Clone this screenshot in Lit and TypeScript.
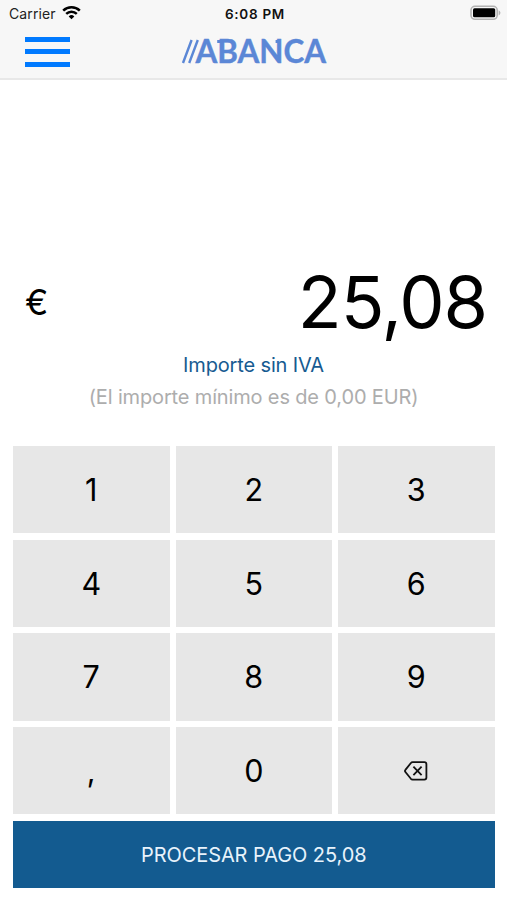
import { LitElement, html, css, svg } from "lit";
import { customElement, property } from "lit/decorators.js";

@customElement("status-bar")
class StatusBar extends LitElement {
  static styles = css`
    :host { display: grid; grid-template-columns: 1fr auto 1fr; align-items: center; height: 28px; padding: 0 6px 0 9px; }
    .left { display: flex; align-items: center; gap: 6px; font-size: 14px; letter-spacing: 0.1px; color: #222; }
    .left svg { margin-top: -3px; }
    .time { font-size: 13.5px; font-weight: 600; letter-spacing: 0.7px; margin-top: -1px; color: #111; }
    .left span { margin-top: -1px; }
    .right { display: flex; justify-content: flex-end; margin-top: -2px; }
    svg { display: block; }
  `;
  render() {
    return html`
      <div class="left">
        <span>Carrier</span>
        <svg width="19" height="15" viewBox="0 0 19 15" fill="none" stroke="#000" stroke-width="2.5">
          <path d="M1.2 5.6a11.8 11.8 0 0 1 16.6 0" />
          <path d="M4.2 8.9a7.6 7.6 0 0 1 10.6 0" />
          <path d="M9.5 14.2l-2.8-2.8a4 4 0 0 1 5.6 0z" fill="#000" stroke="none" />
        </svg>
      </div>
      <span class="time">6:08 PM</span>
      <div class="right">
        <svg width="31" height="16" viewBox="0 0 31 16">
          <rect x="1" y="1.3" width="26.2" height="13" rx="4" fill="#f7f7f7" stroke="#b2b2b2" stroke-width="1.6" />
          <rect x="3" y="3.3" width="22.2" height="9" rx="1.5" fill="#000" />
          <path d="M28.6 5.2c2.4 1.2 2.4 4 0 5.2z" fill="#b2b2b2" />
        </svg>
      </div>
    `;
  }
}

@customElement("nav-bar")
class NavBar extends LitElement {
  static styles = css`
    :host { display: grid; grid-template-columns: 1fr auto 1fr; height: 50px; padding: 0 25px; }
    .menu { display: flex; flex-direction: column; gap: 7.7px; width: 45px; padding-top: 9px; }
    .bar { height: 4.8px; background: #007aff; }
    .logo { display: block; margin-top: 4px; }
    .word { font: 700 32px "Lato", sans-serif; fill: #5b87d6; stroke: #5b87d6; stroke-width: 0.4; }
  `;
  render() {
    return html`
      <div class="menu"><div class="bar"></div><div class="bar"></div><div class="bar"></div></div>
      <svg class="logo" width="150" height="42" viewBox="0 0 150 42">
        <path d="M4 31L12.6 8M10.2 31L18.8 8" stroke="#5b87d6" stroke-width="2.4" />
        <text class="word" x="16.4" y="31" textLength="130.6" lengthAdjust="spacingAndGlyphs">ABANCA</text>
        <path d="M38.2 9.5h5M96.6 9.5h4" stroke="#5b87d6" stroke-width="3" />
      </svg>
      <span></span>
    `;
  }
}

const backspace = svg`
  <svg class="erase" width="24" height="20" viewBox="0 0 24 20" fill="none" stroke="#111" stroke-width="1.8" stroke-linejoin="round">
    <path d="M8.6 1.2h11.8a2 2 0 0 1 2 2v13.4a2 2 0 0 1-2 2H8.6a2.4 2.4 0 0 1-1.7-.8L1.6 11.2a1.9 1.9 0 0 1 0-2.6L6.9 2a2.4 2.4 0 0 1 1.7-.8z" />
    <path d="M9.4 5.7l8.2 8.4M17.6 5.7l-8.2 8.4" />
  </svg>`;

@customElement("key-pad")
class KeyPad extends LitElement {
  static styles = css`
    :host { display: grid; grid-template-columns: repeat(3, 1fr); grid-auto-rows: 87.2px; gap: 6.5px 6px; }
    .key { border: 0; padding: 0; background: #e7e7e7; font: 400 30.5px "Inter", sans-serif; color: #000; display: flex; align-items: center; justify-content: center; }
  `;
  render() {
    const keys = ["1", "2", "3", "4", "5", "6", "7", "8", "9", ",", "0", backspace];
    return keys.map((k) => html`<button class="key">${k}</button>`);
  }
}

@customElement("app-root")
class AppRoot extends LitElement {
  @property() amount = "25,08";
  static styles = css`
    :host { display: flex; flex-direction: column; box-sizing: border-box; height: 900px; background: #fff; font-family: "Inter", sans-serif; }
    .header { background: #f7f7f7; border-bottom: 2px solid #e8e8e8; height: 77.5px; }
    .amount { display: flex; align-items: center; justify-content: space-between; margin-top: 178.5px; height: 88px; padding: 0 20px 0 25px; }
    .currency { font-size: 35px; line-height: 88px; }
    .value { font-size: 72px; line-height: 88px; letter-spacing: -1.1px; }
    .notes { text-align: center; font-size: 20px; line-height: 32px; margin-top: 3px; }
    .label { color: #175b91; letter-spacing: -0.15px; }
    .hint { color: #adadad; letter-spacing: -0.15px; }
    .pad { display: flex; flex-direction: column; gap: 6.5px; padding: 0 12.5px 0 13px; margin-top: 33px; }
    .pay { border: 0; padding: 1px 0 0; height: 67px; background: #135b90; color: #e8f3fc; font: 400 20px "Inter", sans-serif; letter-spacing: -0.08px; }
  `;
  render() {
    return html`
      <div class="header"><status-bar></status-bar><nav-bar></nav-bar></div>
      <div class="amount"><span class="currency">€</span><span class="value">${this.amount}</span></div>
      <div class="notes">
        <div class="label">Importe sin IVA</div>
        <div class="hint">(El importe mínimo es de 0,00 EUR)</div>
      </div>
      <div class="pad">
        <key-pad></key-pad>
        <button class="pay">PROCESAR PAGO ${this.amount}</button>
      </div>
    `;
  }
}
